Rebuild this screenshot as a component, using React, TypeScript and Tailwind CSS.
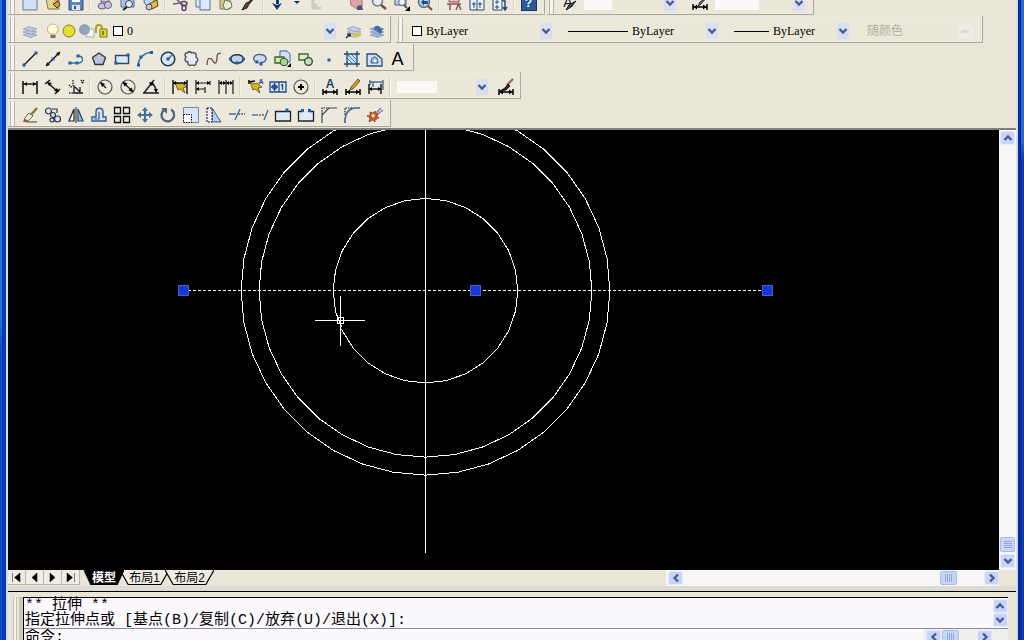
import React from 'react';

interface ToolButtonProps {
    name: string;
}

interface ComboProps {
    label: string;
    value?: string;
    className: string;
    disabled?: boolean;
    children?: React.ReactNode;
}

const NAVY = '#1d3f6e';
const INK = '#1a1a1a';

const stroke = { fill: 'none', stroke: INK, strokeWidth: 1.2 };
const blue = { fill: 'none', stroke: '#3f6f9f', strokeWidth: 1.4 };

const Dot = ({ x, y }: { x: number; y: number }) => (
    <rect x={x - 1.5} y={y - 1.5} width="3" height="3" fill="#1f5f9f" />
);

const DimBar = ({ y }: { y: number }) => (
    <g>
        <path d={`M1 ${y - 3}v6M15 ${y - 3}v6M1 ${y}h14`} fill="none" stroke="#000" strokeWidth="1.5" />
        <path d={`M1.5 ${y}l3.5-2.6v5.2zM14.5 ${y}l-3.5-2.6v5.2z`} fill="#000" />
    </g>
);

const Bolt = () => (
    <path d="M3 3l5 2 2-1 5 4-4 1 2 5-5-4-2 1z" fill="#d9b32c" stroke="#5a4708" strokeWidth="0.8" />
);

const Layers = ({ color }: { color: string }) => (
    <g fill={color} stroke="#7c8db4" strokeWidth="0.6">
        <path d="M1 12l6-2 8 2-6 2.5z" />
        <path d="M1 9l6-2 8 2-6 2.5z" />
        <path d="M1 6l6-2.5 8 2.5-6 2.5z" />
    </g>
);

const icons: Record<string, React.ReactNode> = {
    New: <g><path d="M1 0h11l3 3v12H1z" fill="#cfe0f5" stroke="#5b7fae" /><path d="M11 0v4h4" fill="#fff" stroke="#5b7fae" /></g>,
    Open: <g><path d="M1 3h6l2 2h5v9H3z" fill="#e5d493" stroke="#8a7430" /><path d="M8 9l5-3 2 4-3 3z" fill="#d9a520" stroke="#333" /></g>,
    Save: <g><path d="M1 1h14v14H1z" fill="#5d86bf" stroke="#2c4e80" /><path d="M4 1h8v6H4z" fill="#fff" /><path d="M4 10h8v5H4z" fill="#d9e4f2" /><path d="M6 11h2v3H6z" fill="#2c4e80" /></g>,
    Plot: <g fill="#c9c4dc" stroke="#64597f"><path d="M4 1h8v6H4z" /><ellipse cx="5" cy="11" rx="4" ry="3" /><ellipse cx="11" cy="10" rx="3.5" ry="3.5" /></g>,
    Preview: <g><path d="M1 2h13v10H1z" fill="#a9c2e6" stroke="#4f6d9c" /><circle cx="9" cy="9" r="3.5" fill="#dceafa" stroke="#444" /><path d="M7 12l-4 3" stroke="#222" strokeWidth="2" /></g>,
    Publish: <g><circle cx="6" cy="6" r="5" fill="#c4d6ee" stroke="#516e9c" /><path d="M6 9l8-4 1 6-6 3z" fill="#e3bb3c" stroke="#5b4a12" /><circle cx="6" cy="12" r="3" fill="#d5c4cf" stroke="#54405a" /></g>,
    Cut: <g fill="none"><path d="M2 2l10 9M8 8L1 9" stroke="#6e6178" strokeWidth="1.6" /><ellipse cx="12" cy="8.5" rx="3" ry="2" stroke="#57466b" strokeWidth="1.5" /><ellipse cx="12" cy="13" rx="2" ry="2.5" stroke="#57466b" strokeWidth="1.5" /></g>,
    Copy: <g fill="#dce9f8" stroke="#4e7397"><path d="M1 0h9v12H1z" /><path d="M5 3h10v12H5z" /></g>,
    Paste: <g><path d="M2 1h10v13H2z" fill="#d3c693" stroke="#7f7a50" /><path d="M7 5l6 2 1 5-6 3-3-4z" fill="#e9eed9" stroke="#66735c" /></g>,
    'Match Properties': <g><path d="M14 1L8 8" stroke="#333" strokeWidth="2.5" /><path d="M9 7l-3 6-5 2 4-7z" fill="#6b4126" stroke="#222" /></g>,
    Undo: <g fill="#12376f"><path d="M6 0h3v9H6z" /><path d="M2 8l5 2 5-2-5 7z" /></g>,
    Redo: <path d="M4 1v13M4 13h8M5 10h3" fill="none" stroke="#cfcbc4" strokeWidth="3" />,
    Pan: <g><path d="M2 4l5-4 7 5v6l-5 3-6-4z" fill="#dfa3a5" stroke="#ae7077" /><path d="M9 11l5-1 1 5H9z" fill="#4d5578" /></g>,
    Zoom: <g><circle cx="6.5" cy="6" r="5" fill="#e3eaf0" stroke="#6e7a87" strokeWidth="1.5" /><path d="M10 10l5 4" stroke="#7a4b22" strokeWidth="2.5" /></g>,
    'Zoom Window': <g><path d="M1 1h11v9H1z" fill="#c4d3e5" stroke="#44618a" /><circle cx="8" cy="7" r="3.5" fill="#edf3fa" stroke="#44618a" /><path d="M10 10l3 3" stroke="#7a4b22" strokeWidth="2" /><path d="M16 11v5h-5z" fill="#000" /></g>,
    'Zoom Previous': <g><circle cx="7" cy="7" r="5.5" fill="#bfd3e8" stroke="#5d7186" strokeWidth="1.5" /><path d="M4 7l3-3v2h4v3H7v2z" fill="#214f86" /><path d="M11 11l4 4" stroke="#7a4b22" strokeWidth="2" /></g>,
    Properties: <g><path d="M1 9h14M4 9v6M10 15l2.5-6 2.5 6" fill="none" stroke="#8a5560" strokeWidth="1.5" /><path d="M3 2h10v5H3z" fill="#e7b9b4" stroke="#8a5560" /></g>,
    'Design Center': <g fill="#eef3fa" stroke="#294a78"><path d="M1 1h14v14H1z" /><path d="M4 8h2v2H4zM10 8h2v2h-2zM4 12h2M10 12h2M8 1v14" /></g>,
    'Tool Palettes': <g fill="#eef3fa" stroke="#294a78"><path d="M1 2h9v13H1z" /><path d="M4 6h2v2H4zM4 11h2v2H4z" /><path d="M10 6h3v8M11 12l2 3 2-3" strokeWidth="1.5" /></g>,
    'Text Style': (
        <g>
            <text x="7" y="12" textAnchor="middle" fontSize="14" fill="#222" fontFamily="Liberation Sans, sans-serif">A</text>
            <path d="M15 6l-5 6-5 3 3-5z" fill="#555" stroke="#111" />
        </g>
    ),
    'Dimension Style': <g><DimBar y={12} /><path d="M14 3l-5 6-3 2 2-4z" fill="#7f8c86" stroke="#222" /></g>,

    'Layer Manager': <Layers color="#bcc5da" />,
    'Layer Current': <g><Layers color="#c3d0e6" /><path d="M5 12l5-2 6 1-5 3z" fill="#d4c630" /><path d="M0 15l4-4M1 11h3v3" {...stroke} /></g>,
    'Layer Previous': <g><Layers color="#9eb3db" /><path d="M5 7c0-5 6-6 7-1l2-1-2 6-5-3 2-1z" fill="#3c6ba6" /></g>,

    Line: <g><path d="M2 14L14 2" {...stroke} strokeWidth="1.4" /><Dot x={2} y={14} /><Dot x={14} y={2} /></g>,
    'Construction Line': <g><path d="M1 15L15 1" {...stroke} strokeWidth="1.5" /><path d="M15 1l-1 4-3-3zM1 15l1-4 3 3z" fill="#111" /><Dot x={8} y={8} /></g>,
    Polyline: <g><path d="M2 12h8c6 0 6-7 0-7" {...blue} /><Dot x={2} y={12} /><Dot x={9} y={12} /><Dot x={10} y={5} /></g>,
    Polygon: <path d="M8 2l6.5 4.5-2.5 7H4l-2.5-7z" fill="#b5c4dc" stroke="#333" strokeWidth="1.3" />,
    Rectangle: <g><path d="M1.5 4.5h13v8h-13z" fill="#dbe6f3" stroke="#26496f" strokeWidth="1.4" /><Dot x={2} y={12} /><Dot x={14} y={4} /></g>,
    Arc: <g><path d="M1 14C2 7 7 2 15 1" {...blue} /><Dot x={1.5} y={14} /><Dot x={4} y={6} /><Dot x={14.5} y={1.5} /></g>,
    Circle: <g><circle cx="8" cy="8" r="6.8" fill="#d8e8f7" stroke="#26394f" strokeWidth="1.5" /><path d="M8 8l5-5" {...blue} /><Dot x={8} y={8} /></g>,
    'Revision Cloud': <path d="M4 2c2-2 4-1 5 0 3-1 5 1 4 4 3 2 2 5 0 5 1 3-2 4-4 3-2 1-5 0-4-3-3 0-4-3-2-5-2-2-1-4 1-4z" fill="#ece9ee" stroke="#3c4658" strokeWidth="1.3" />,
    Spline: <path d="M1 14c0-8 4-8 6-4s4 2 4-3 1-4 4-5" fill="none" stroke="#5b4f48" strokeWidth="1.3" />,
    Ellipse: <g><ellipse cx="8" cy="8" rx="6.5" ry="4.3" fill="#bfd3ea" stroke="#1f3350" strokeWidth="1.5" /><Dot x={1.5} y={8} /><Dot x={14.5} y={8} /><Dot x={8} y={12} /></g>,
    'Ellipse Arc': <g><path d="M4 11C-1 8 3 3 8 3.5c6 0 8 5 4 7.5l-4 1" fill="#cfdcef" stroke="#4b6286" strokeWidth="1.3" /><Dot x={5} y={11} /><Dot x={9} y={13} /></g>,
    'Insert Block': <g><path d="M5 0h7l3 3v8H5z" fill="#cfe3f5" stroke="#41668c" /><path d="M0 6h9v6H0z" fill="#d6e9a8" stroke="#2f6b26" strokeWidth="1.3" /><circle cx="9" cy="11" r="3.8" fill="#b5cf9a" stroke="#2b4f2b" /><path d="M16 12v4h-4z" fill="#000" /></g>,
    'Make Block': <g><path d="M1 3h9v6H1z" fill="#dff0cf" stroke="#2f6b26" strokeWidth="1.3" /><circle cx="10.5" cy="10.5" r="3.8" fill="#c8dcc0" stroke="#2b4340" strokeWidth="1.3" /></g>,
    Point: <Dot x={8} y={9} />,
    Hatch: <g><path d="M3 3h10v10H3z" fill="#cbdff2" /><path d="M3 3l10 10M7 3l6 6M3 7l6 6M3 11l2 2M11 3l2 2" stroke="#4d7ba6" /><path d="M3 0v16M13 0v16M0 3h16M0 13h16" stroke="#1f4b75" strokeWidth="1.3" /></g>,
    Region: <g><path d="M0 3h9l6 5v7H0z" fill="#d3e2f5" stroke="#2a4b78" strokeWidth="1.3" /><path d="M4 12c0-5 2-6 4-6s3 2 3 6z" fill="#9db7dc" stroke="#33547f" /><circle cx="8" cy="10" r="1.5" fill="#fff" /></g>,

    'Linear Dimension': <g><path d="M1 2v13M15 2v13M1 5h14" {...stroke} strokeWidth="1.6" /><path d="M2 5l3-2v4zM14 5l-3-2v4z" /></g>,
    'Aligned Dimension': <g><path d="M0 5l5-4M10 15l5-5M3 4l9 8" {...stroke} strokeWidth="1.6" /><path d="M2 3l5 1-3 3zM14 13l-5-1 3-3z" /></g>,
    'Ordinate Dimension': <g><path d="M6 6v8h9M7 8l5 5M12 8v5" {...stroke} strokeWidth="1.3" /><path d="M1 14h4M5 1v4M13 1l3 4M16 1l-3 4M1 6l2 2 2-2" stroke="#222" strokeDasharray="1.5 1" strokeWidth="1.3" fill="none" /></g>,
    'Radius Dimension': <g><circle cx="8" cy="8" r="7" {...stroke} stroke="#555" /><path d="M9 9L4 4" {...stroke} /><path d="M3 3l5 2-3 3z" /></g>,
    'Diameter Dimension': <g><circle cx="8" cy="8" r="7" {...stroke} stroke="#555" /><path d="M3 3l10 10" {...stroke} /><path d="M2.5 2.5l5 2-3 3zM13.5 13.5l-5-2 3-3z" /></g>,
    'Angular Dimension': <g><path d="M0 14h16M1 14L11 1M8 4c4 2 5 6 5 9" {...stroke} strokeWidth="1.4" /><path d="M6 3l5 1-3 3zM13 14l-2-4h4z" /></g>,
    'Quick Dimension': <g><Bolt /><path d="M1 1v14M15 1v14M1 4h14" {...stroke} strokeWidth="1.5" /><path d="M1 4l3-2v4zM15 4l-3-2v4z" /></g>,
    Baseline: <g><path d="M1 1v14M1 4h14M15 2v4M1 10h9M10 8v6" {...stroke} /><path d="M1 4l3-2v4zM1 10l3-2v4zM15 4l-3-2v4z" /></g>,
    Continue: <g><path d="M1 1v14M8 1v14M15 1v14M1 4h14" {...stroke} /><path d="M1 4l3-2v4zM8 4l3-2v4zM8 4L5 2v4zM15 4l-3-2v4z" /></g>,
    'Quick Leader': (
        <g>
            <Bolt />
            <path d="M1 3l7-1M2 1v4" stroke="#111" strokeWidth="1.5" />
            <text x="14" y="5" textAnchor="middle" fontSize="7" fontWeight="700" fill="#1f4b85" fontFamily="Liberation Sans, sans-serif">A</text>
        </g>
    ),
    Tolerance: <g fill="#dbe7f6" stroke="#1f4b85" strokeWidth="1.3"><path d="M0 3h16v10H0zM9 3v10" /><circle cx="4.5" cy="8" r="2" /><path d="M4.5 4v8M1 8h7M12.5 5v6M11 6h2" /></g>,
    'Center Mark': <g><circle cx="8" cy="8" r="7" {...stroke} stroke="#555" /><path d="M8 5v6M5 8h6" stroke="#000" strokeWidth="2" /></g>,
    'Dimension Edit': (
        <g>
            <DimBar y={13} />
            <text x="8" y="9" textAnchor="middle" fontSize="12" fontWeight="700" fill={NAVY} fontFamily="Liberation Sans, sans-serif">A</text>
        </g>
    ),
    'Dimension Text Edit': <g><DimBar y={13} /><path d="M13 0l2 2-7 8-3 1 1-3z" fill="#d99a2c" stroke="#5a3d0c" strokeWidth="0.8" /></g>,
    'Dimension Update': <g><path d="M1 3h14M2 1v5M15 1v10M5 3v5" {...blue} /><path d="M1 5v10M13 5v10M1 10h12" {...stroke} strokeWidth="1.5" /><path d="M1 10l3-2v4zM13 10l-3-2v4z" /></g>,
    'Dimension Styles': <g><DimBar y={13} /><path d="M15 0L9 6" stroke="#8a6a48" strokeWidth="2" /><path d="M10 5l2 2-4 4-6 1 5-3z" fill="#333" stroke="#111" /></g>,

    Erase: <g><path d="M15 1L8 9" stroke="#8a7a38" strokeWidth="2.5" /><path d="M7 6l4 3-5 5-4-2z" fill="#e8ecd4" stroke="#6e6a3f" /><path d="M2 12l4 2-2 1H1z" fill="#c04a38" /><path d="M4 15h11" stroke="#444" /></g>,
    'Copy Object': <g fill="#dbe3ee" stroke="#2b3547" strokeWidth="1.2"><circle cx="3.5" cy="4" r="3" /><path d="M7 2h5v4" fill="none" /><circle cx="8" cy="8" r="2.5" /><circle cx="12.5" cy="12" r="3" /><circle cx="7" cy="13" r="2" /></g>,
    Mirror: <g><path d="M6 2v12H1z" fill="#fff" stroke="#222" strokeWidth="1.2" /><path d="M10 2v12h5z" fill="#9dbbdc" stroke="#29486f" strokeWidth="1.2" /><path d="M8 0v16" stroke="#222" /></g>,
    Offset: <g fill="none"><path d="M1 14h14v-4h-3V5c0-5-7-5-7 0v5H1z" fill="#d7e5f5" stroke="#2e5d91" strokeWidth="1.4" /><path d="M3 12h5V5" stroke="#2e5d91" strokeWidth="1.2" /></g>,
    Array: <g fill="#eee" stroke="#111" strokeWidth="1.3"><path d="M.5.5h6v6h-6zM9.5.5h6v6h-6zM.5 9.5h6v6h-6zM9.5 9.5h6v6h-6z" /></g>,
    Move: <path d="M8 0l3 4H9v3h3V5l4 3-4 3V9H9v3h2l-3 4-3-4h2V9H4v2L0 8l4-3v2h3V4H5z" fill="#4a7096" />,
    Rotate: <g fill="none"><path d="M4 3a6.3 6.3 0 1 0 7-.4" stroke="#4b6583" strokeWidth="2.3" /><path d="M1 1h6v6z" fill="#4b6583" /></g>,
    Scale: <g><path d="M.5.5h15v15H.5z" fill="#d9e6f5" stroke="#6d88ab" /><path d="M.5 7.5h8v8h-8z" fill="#fff" stroke="#111" strokeDasharray="1.5 1" /></g>,
    Stretch: <g><path d="M6 1l9 14H6z" fill="#b7cce5" stroke="#3f5f88" /><path d="M1 1h5v14H1z" fill="#eef" stroke="#111" strokeDasharray="2 1" /></g>,
    Trim: <g><path d="M9 7h7" {...stroke} strokeDasharray="2 1" /><path d="M0 7h7M11 2L6 13" {...blue} /></g>,
    Extend: <g><path d="M0 8h6" {...blue} /><path d="M7 8h5" {...stroke} strokeDasharray="2 1" /><path d="M16 3l-4 10" {...blue} /></g>,
    'Break at Point': <g><path d="M.5 4.5h15V14H.5z" fill="#dfe9f7" stroke="#222" strokeWidth="1.3" /><Dot x={12} y={3} /></g>,
    Break: <g><path d="M5 4.5H.5V14h15V4.5H11" fill="#dfe9f7" stroke="#222" strokeWidth="1.3" /><Dot x={4.5} y={3.5} /><Dot x={11.5} y={3.5} /></g>,
    Chamfer: <g><path d="M1 16V8l7-7h8" {...stroke} stroke="#27476d" /><path d="M1 7V1h7" {...stroke} strokeDasharray="1.5 1" /></g>,
    Fillet: <g><path d="M1 16v-4C2 5 5 2 10 1h6" {...stroke} stroke="#3a6596" strokeWidth="1.6" /><path d="M1 8V1h7" {...stroke} strokeDasharray="1.5 1" /></g>,
    Explode: <g><path d="M3 5l3 1 2-2 1 3 3-1-2 3 2 2-3 1-1 3-2-2-4 2 1-4-3-2 3-1z" fill="#c9562f" stroke="#6e2a1a" strokeWidth="0.8" strokeDasharray="2 1" /><path d="M4 8l3-1 1 2-2 2z" fill="#fff0c0" /><path d="M9 6l5-5M12 6l4-3" stroke="#7a8794" strokeWidth="1.5" /></g>,
};

const ToolButton = ({ name }: ToolButtonProps) => (
    <button type="button" aria-label={name} className="flex h-6 w-[23px] shrink-0 items-center justify-center">
        <svg viewBox="0 0 16 16" className="size-4 overflow-visible">{icons[name]}</svg>
    </button>
);

const Tools = ({ names }: { names: string[] }) => (
    <>
        {names.map((name, i) => name === '|'
            ? <div key={i} className="mx-[2px] h-5 w-[2px] shrink-0 border-l border-[#d8d4c4] bg-[#f6f4ea]" />
            : <ToolButton key={i} name={name} />)}
    </>
);

const Toolbar = ({ children }: { children: React.ReactNode }) => (
    <div className="flex h-[27px] shrink-0 items-center border-r border-b border-[#aea59b] bg-[#ece8dc] pt-1">
        <div className="-mt-1 mr-[3px] ml-[2px] h-[25px] w-[5px] shrink-0 border-x border-[#bab5a8] bg-[#f7f5ee]" />
        {children}
    </div>
);

const Chevron = ({ className = '' }: { className?: string }) => (
    <svg viewBox="0 0 10 10" className={`size-[10px] ${className}`}>
        <path d="M1.5 3L5 6.5 8.5 3" fill="none" stroke="#455d92" strokeWidth="2.4" />
    </svg>
);

const Combo = ({ label, value = '', className, disabled = false, children }: ComboProps) => (
    <div className={`flex h-5 shrink-0 items-center bg-[#ebe8da] ${className}`}>
        {children}
        <select
            aria-label={label}
            disabled={disabled}
            className="h-5 min-w-0 flex-1 appearance-none bg-transparent font-['Liberation_Serif','Noto_Sans_CJK_SC',serif] text-xs text-black disabled:text-[#b3b0a0]"
        >
            <option>{value}</option>
        </select>
        {disabled
            ? <span className="mr-1 flex h-4 w-4 items-center justify-center bg-[#eeece4]"><span className="h-[3px] w-2 bg-[#dcdad2]" /></span>
            : <span className="pointer-events-none mr-1 flex h-4 w-3 items-center justify-center bg-[#d9def0]"><Chevron /></span>}
    </div>
);

const Swatch = () => <span className="mr-1 size-[10px] shrink-0 border border-black bg-white" />;

const ScrollButton = ({ label, turn = '' }: { label: string; turn?: string }) => (
    <button type="button" aria-label={label} className="flex h-[14px] w-[15px] shrink-0 items-center justify-center rounded-xs border border-[#e6ecfb] bg-[#c7d5f9]">
        <Chevron className={turn} />
    </button>
);

const Thumb = ({ horizontal = false }: { horizontal?: boolean }) => {
    const ridge = horizontal ? 'h-2 w-px bg-[#8ea6dc]' : 'h-px w-2 bg-[#8ea6dc]';
    return (
        <div className={`flex shrink-0 items-center justify-center gap-px rounded-xs border border-[#a9bde8] bg-[#c7d5f9] ${horizontal ? 'h-[14px] w-[17px]' : 'h-[15px] w-[15px] flex-col'}`}>
            <span className={ridge} />
            <span className={ridge} />
            <span className={ridge} />
            <span className={ridge} />
        </div>
    );
};

// circles are tessellated, the way the viewport draws them before a regen
const ring = (r: number, segments: number) =>
    Array.from({ length: segments }, (_, i) => {
        const a = (i / segments) * Math.PI * 2;
        return `${(417.5 + r * Math.cos(a)).toFixed(1)},${(160.7 + r * Math.sin(a)).toFixed(1)}`;
    }).join(' ');

const Drawing = () => (
    <svg width="991" height="440" className="block" fill="none" stroke="#fff" shapeRendering="crispEdges">
        <polygon points={ring(92.3, 28)} />
        <polygon points={ring(166.4, 36)} />
        <polygon points={ring(184.4, 36)} />
        <path d="M417.5 0v423" />
        <path d="M175 160.5h584" strokeDasharray="3 2" />
        {[175, 467, 759].map((x) => (
            <rect key={x} x={x - 4.5} y="155.5" width="10" height="10" fill="#1238d8" stroke="#4a62b8" />
        ))}
        <path d="M331 195l3 4" stroke="#000" strokeWidth="3" />
        <path d="M307 190.5h50M332.5 166v50" />
        <rect x="329.5" y="187.5" width="6" height="6" stroke="#fff" />
        <path d="M332 195h2v2h-2z" fill="#ddd" stroke="none" />
    </svg>
);

const Tab = ({ name, active = false, className }: { name: string; active?: boolean; className: string }) => (
    <button type="button" className={`relative h-4 shrink-0 text-xs leading-[14px] ${active ? 'z-10 font-bold text-white' : 'text-black'} ${className}`}>
        <svg viewBox="0 0 48 16" preserveAspectRatio="none" className="absolute inset-0 h-full w-full">
            <path d="M0 0l8 14.5h32L48 0" fill={active ? '#000' : '#efede2'} stroke="#000" strokeWidth="1.2" />
        </svg>
        <span className="relative">{name}</span>
    </button>
);

const navIcons = [
    { label: 'First', d: 'M1.5 1v9M9 1v9L3.5 5.5z' },
    { label: 'Previous', d: 'M8 1v9L3 5.5z' },
    { label: 'Next', d: 'M3 1v9l5-4.5z' },
    { label: 'Last', d: 'M9.5 1v9M2 1v9l5.5-4.5z' },
];

export default function App() {
    return (
        <div className="flex h-screen w-full overflow-hidden bg-[#e9e6d8] font-['Liberation_Sans','Noto_Sans_CJK_SC',sans-serif]">
            <div className="flex w-2 shrink-0">
                <div className="w-[2px] bg-linear-to-b from-[#1c74dc] from-50% to-[#0a4cc4] to-55%" />
                <div className="w-1 bg-[#0a38b4]" />
                <div className="w-[2px] bg-[#d5dcf0]" />
            </div>

            <div className="flex min-w-0 flex-1 flex-col">
                <header className="h-[130px] shrink-0 overflow-hidden border-b-2 border-[#7f7f7c]">
                    <div className="flex h-[15px] items-end gap-[2px] overflow-hidden">
                        <Toolbar>
                            <Tools names={['New', 'Open', 'Save', '|', 'Plot', 'Preview', 'Publish', '|', 'Cut', 'Copy', 'Paste', 'Match Properties', '|', 'Undo']} />
                            <button type="button" aria-label="Undo list" className="flex w-4 justify-center">
                                <svg viewBox="0 0 8 8" className="size-2"><path d="M1 2h6L4 5z" fill="#12376f" /></svg>
                            </button>
                            <Tools names={['Redo']} />
                            <div className="w-4" />
                            <Tools names={['Pan', 'Zoom', 'Zoom Window', 'Zoom Previous', '|', 'Properties', 'Design Center', 'Tool Palettes', '|']} />
                            <button type="button" aria-label="Help" className="flex h-6 w-[23px] shrink-0 items-center justify-center">
                                <span className="size-4 border border-[#163860] bg-[#2c5a91] text-center text-xs leading-[14px] font-bold text-white">?</span>
                            </button>
                            <div className="w-1" />
                        </Toolbar>
                        <Toolbar>
                            <Tools names={['Text Style']} />
                            <Combo label="Text style" className="mr-2 w-[100px]">
                                <span className="ml-1 h-[14px] w-7 bg-[#faf9f8]" />
                            </Combo>
                            <Tools names={['Dimension Style']} />
                            <Combo label="Dimension style" className="mr-1 w-[98px]">
                                <span className="ml-1 h-[14px] w-11 bg-[#faf9f8]" />
                            </Combo>
                        </Toolbar>
                    </div>
                    <div className="flex h-7 items-end gap-[5px]">
                        <Toolbar>
                            <Tools names={['Layer Manager']} />
                            <Combo label="Layer" value="0" className="mr-[2px] w-[299px] pl-1">
                                <svg viewBox="0 0 64 16" className="mr-1 h-4 w-16 shrink-0">
                                    <path d="M5 11C0 7 3 1 7.5 1s8 5 3.5 10z" fill="#fffbd8" stroke="#b9b184" />
                                    <path d="M5.5 12h5v3h-5z" fill="#7b7355" />
                                    <circle cx="24" cy="8" r="6" fill="#e6e02a" stroke="#857f2e" />
                                    <path d="M41 6h8v8h-8z" fill="#f4f4f4" stroke="#a5adb8" />
                                    <circle cx="39.5" cy="6.5" r="5.5" fill="#94a3ba" />
                                    <path d="M51 10V5c0-4 6-4 6 0v2" fill="none" stroke="#b0a51c" strokeWidth="2" />
                                    <path d="M55 6h7v8h-7z" fill="#e2d630" stroke="#83791c" />
                                    <path d="M58 8v4" stroke="#635b12" strokeWidth="1.5" />
                                </svg>
                                <Swatch />
                            </Combo>
                            <Tools names={['Layer Current', 'Layer Previous']} />
                            <div className="w-[2px]" />
                        </Toolbar>
                        <Toolbar>
                            <Combo label="Color" value="ByLayer" className="mr-[6px] w-[150px] pl-[6px]">
                                <Swatch />
                            </Combo>
                            <Combo label="Linetype" value="ByLayer" className="mr-[6px] w-[160px] pl-[6px]">
                                <span className="mr-1 h-px w-[60px] bg-black" />
                            </Combo>
                            <Combo label="Lineweight" value="ByLayer" className="mr-[6px] w-[125px] pl-[6px]">
                                <span className="mr-1 h-px w-[35px] bg-black" />
                            </Combo>
                            <Combo label="Plot style" value="随颜色" disabled className="mr-[5px] w-[118px] pl-[8px]" />
                        </Toolbar>
                    </div>
                    <div className="flex h-7 items-end">
                        <Toolbar>
                            <Tools names={['Line', 'Construction Line', 'Polyline', 'Polygon', 'Rectangle', 'Arc', 'Circle', 'Revision Cloud', 'Spline', 'Ellipse', 'Ellipse Arc', 'Insert Block', 'Make Block', 'Point', 'Hatch', 'Region']} />
                            <button type="button" aria-label="Multiline Text" className="h-6 w-[23px] shrink-0 text-center text-lg leading-6 text-black">A</button>
                            <div className="w-1" />
                        </Toolbar>
                    </div>
                    <div className="flex h-7 items-end">
                        <Toolbar>
                            <Tools names={['Linear Dimension', 'Aligned Dimension', 'Ordinate Dimension', '|', 'Radius Dimension', 'Diameter Dimension', 'Angular Dimension', '|', 'Quick Dimension', 'Baseline', 'Continue', '|', 'Quick Leader', 'Tolerance', 'Center Mark', '|', 'Dimension Edit', 'Dimension Text Edit', 'Dimension Update', '|']} />
                            <Combo label="Current dimension style" className="mr-[2px] w-[99px]">
                                <span className="ml-1 h-3 w-10 bg-[#faf9f8]" />
                            </Combo>
                            <Tools names={['Dimension Styles']} />
                            <div className="w-[3px]" />
                        </Toolbar>
                    </div>
                    <div className="flex h-7 items-end">
                        <Toolbar>
                            <Tools names={['Erase', 'Copy Object', 'Mirror', 'Offset', 'Array', 'Move', 'Rotate', 'Scale', 'Stretch', 'Trim', 'Extend', 'Break at Point', 'Break', 'Chamfer', 'Fillet', 'Explode']} />
                            <div className="w-1" />
                        </Toolbar>
                    </div>
                </header>

                <main className="flex min-h-0 flex-1">
                    <div className="min-w-0 flex-1 overflow-hidden bg-black">
                        <Drawing />
                    </div>
                    <div className="flex w-[17px] shrink-0 flex-col items-center justify-between bg-[#f6f5f8] pt-px pb-[2px]">
                        <ScrollButton label="Scroll up" turn="rotate-180" />
                        <div className="flex flex-col items-center gap-[2px]">
                            <Thumb />
                            <ScrollButton label="Scroll down" />
                        </div>
                    </div>
                </main>

                <nav className="flex h-4 shrink-0 pr-[17px]">
                    {navIcons.map(({ label, d }) => (
                        <button key={label} type="button" aria-label={label} className="flex h-[15px] w-[18px] items-center justify-center border-r border-b border-[#bbb7a8] bg-[#efede3]">
                            <svg viewBox="0 0 11 11" className="size-[11px]"><path d={d} fill="#000" stroke="#000" strokeWidth="0.5" /></svg>
                        </button>
                    ))}
                    <Tab name="模型" active className="ml-1 w-10" />
                    <Tab name="布局1" className="-ml-1 w-[49px]" />
                    <Tab name="布局2" className="-ml-1 w-[49px]" />
                    <div className="ml-auto flex w-[333px] items-center bg-[#f7f6f6] pl-[2px]">
                        <ScrollButton label="Scroll left" turn="rotate-90" />
                        <div className="flex flex-1 justify-end pr-[27px]">
                            <Thumb horizontal />
                        </div>
                        <ScrollButton label="Scroll right" turn="-rotate-90" />
                    </div>
                </nav>
                <div className="h-[6px] shrink-0 border-b border-black bg-[#dedbd2]" />

                <section className="flex shrink-0 pt-[5px] pr-2 pl-[5px]">
                    <div className="w-1 border-x border-[#c4c0b3] bg-[#f7f5ee]" />
                    <div className="ml-[2px] w-1 bg-[#c9c6bc]" />
                    <div className="min-w-0 flex-1 border-t border-l border-black bg-[#fbf9fd] font-['Liberation_Mono','Noto_Sans_CJK_SC',monospace] text-[15px] text-black">
                        <div className="flex h-[31px] border-b border-[#8c8c8c]">
                            <div className="min-w-0 flex-1 pl-px leading-[15px] whitespace-pre">
                                <p>** 拉伸 **</p>
                                <p>指定拉伸点或 [基点(B)/复制(C)/放弃(U)/退出(X)]:</p>
                            </div>
                            <div className="flex w-4 flex-col items-center justify-between py-px">
                                <ScrollButton label="History up" turn="rotate-180" />
                                <ScrollButton label="History down" />
                            </div>
                        </div>
                        <div className="flex h-[11px] overflow-hidden">
                            <label htmlFor="command" className="pl-px leading-[18px]">命令:</label>
                            <input id="command" type="text" className="h-4 min-w-0 flex-1 bg-transparent outline-none" />
                            <div className="flex h-4 w-[85px] items-start bg-[#f1efec] pt-px pl-[3px]">
                                <ScrollButton label="Command left" turn="rotate-90" />
                                <div className="flex-1 pl-px"><Thumb horizontal /></div>
                                <ScrollButton label="Command right" turn="-rotate-90" />
                                <div className="w-4" />
                            </div>
                        </div>
                    </div>
                </section>
            </div>

            <div className="flex w-2 shrink-0">
                <div className="w-[2px] bg-[#d5dcf0]" />
                <div className="w-[3px] bg-[#062a9c]" />
                <div className="w-[3px] bg-linear-to-b from-[#2a68cc] from-22% to-[#0a38a8] to-25%" />
            </div>
        </div>
    );
}
